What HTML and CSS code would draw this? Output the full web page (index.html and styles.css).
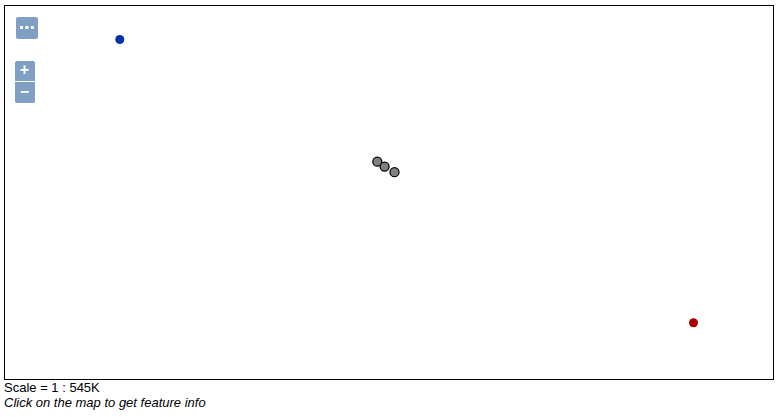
FILE: index.html
```html
<!DOCTYPE html>
<html lang="en">
<head>
<meta charset="utf-8">
<title>Map</title>
<link rel="stylesheet" href="styles.css">
</head>
<body>
<div class="map">
  <svg class="features" viewBox="0 0 768 373" width="768" height="373">
    <circle cx="114.8" cy="33.5" r="4.5" fill="#0033aa"/>
    <g class="selected">
      <circle cx="372.3" cy="155.7" r="4.5"/>
      <circle cx="379.6" cy="160.6" r="4.5"/>
      <circle cx="389.5" cy="166.2" r="4.5"/>
    </g>
    <circle cx="688.5" cy="316.7" r="4.5" fill="#aa0000"/>
  </svg>
  <div class="controls">
    <button class="options" aria-label="Options">
      <svg viewBox="0 0 22 22" width="22" height="22"><path d="M4.1 9.1h2.9v2.9H4.1zM9.3 9.1h3.2v2.9h-3.2zM15 9.1h2.9v2.9H15z" fill="#fff"/></svg>
    </button>
    <div class="zoom">
      <button class="zoom-in">+</button>
      <button class="zoom-out">−</button>
    </div>
  </div>
</div>
<div class="scale">Scale = 1 : 545K</div>
<div class="info">Click on the map to get feature info</div>
</body>
</html>
```
FILE: styles.css
```css
body {
  margin: 5px 7px 0 4px;
  font: 13px/15px "Liberation Sans", Arial, sans-serif;
  color: #000;
  background: #fff;
}
.map {
  position: relative;
  box-sizing: border-box;
  height: 375px;
  border: 1px solid #000;
}
.features { position: absolute; inset: 0; }
.selected { fill: #808080; stroke: #000; stroke-width: 1.25; }
.controls { position: absolute; left: 10px; top: 11px; }
button {
  display: block;
  padding: 0;
  border: 0;
  background: #7f9fc5;
  color: #fff;
  font: bold 16px/18px "Liberation Sans", Arial, sans-serif;
}
.options { width: 22px; height: 22px; margin: 0 0 22px 1px; border-radius: 2px; }
.options svg { display: block; }
.zoom { display: grid; gap: 1px; width: 20px; }
.zoom-in { height: 20px; padding: 0 1px 2px 0; border-radius: 2px 2px 0 0; }
.zoom-out { height: 21px; padding: 0 1px 2px 0; border-radius: 0 0 2px 2px; }
.info { font-style: italic; }
```
